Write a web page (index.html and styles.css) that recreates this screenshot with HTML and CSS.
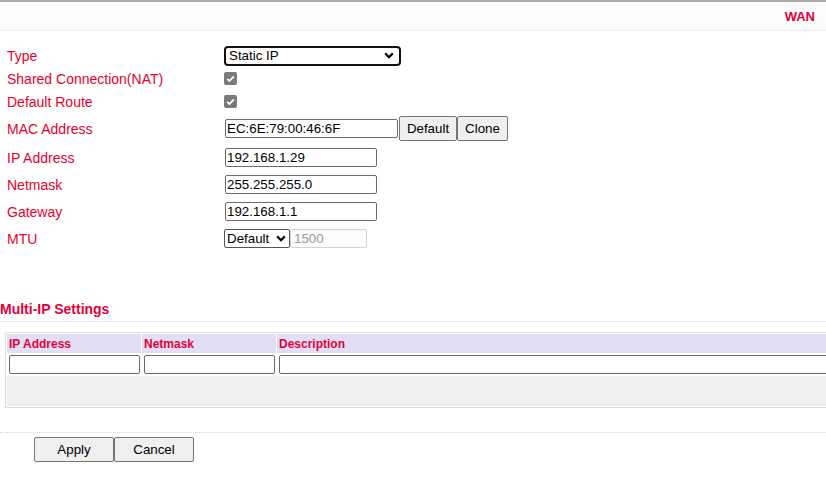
FILE: index.html
```html
<!DOCTYPE html>
<html lang="en">
<head>
    <meta charset="UTF-8">
    <meta name="viewport" content="width=device-width, initial-scale=1.0">
    <title>WAN</title>
    <link rel="stylesheet" href="styles.css">
</head>
<body>
    <div class="topbar">
        <span class="page-title">WAN</span>
    </div>

    <div class="wan-form">
        <div class="label">Type</div>
        <div class="field">
            <select class="sel sel-type">
                <option>Static IP</option>
                <option>DHCP</option>
                <option>PPPoE</option>
            </select>
        </div>

        <div class="label">Shared Connection(NAT)</div>
        <div class="field">
            <span class="check">
                <svg width="13" height="13" viewBox="0 0 13 13"><rect width="13" height="13" rx="2" fill="#7a7a7a"/><path d="M3.2 6.9 L5.4 9 L9.9 4.3" stroke="#fff" stroke-width="1.8" fill="none"/></svg>
            </span>
        </div>

        <div class="label">Default Route</div>
        <div class="field">
            <span class="check">
                <svg width="13" height="13" viewBox="0 0 13 13"><rect width="13" height="13" rx="2" fill="#7a7a7a"/><path d="M3.2 6.9 L5.4 9 L9.9 4.3" stroke="#fff" stroke-width="1.8" fill="none"/></svg>
            </span>
        </div>

        <div class="label">MAC Address</div>
        <div class="field">
            <input class="txt txt-mac" type="text" value="EC:6E:79:00:46:6F">
            <button class="btn btn-default">Default</button>
            <button class="btn btn-clone">Clone</button>
        </div>

        <div class="label">IP Address</div>
        <div class="field"><input class="txt" type="text" value="192.168.1.29"></div>

        <div class="label">Netmask</div>
        <div class="field"><input class="txt" type="text" value="255.255.255.0"></div>

        <div class="label">Gateway</div>
        <div class="field"><input class="txt" type="text" value="192.168.1.1"></div>

        <div class="label">MTU</div>
        <div class="field">
            <select class="sel sel-mtu">
                <option>Default</option>
                <option>Manual</option>
            </select>
            <input class="txt txt-mtu" type="text" value="1500" disabled>
        </div>
    </div>

    <div class="section-title">Multi-IP Settings</div>

    <div class="multi-wrap">
        <table class="multi">
            <tr>
                <th class="col-ip">IP Address</th>
                <th class="col-mask">Netmask</th>
                <th>Description</th>
            </tr>
            <tr class="edit-row">
                <td><input class="txt cell-input" type="text"></td>
                <td><input class="txt cell-input" type="text"></td>
                <td><input class="txt cell-input" type="text"></td>
            </tr>
            <tr class="empty-row">
                <td colspan="3"></td>
            </tr>
        </table>
    </div>

    <div class="actions">
        <button class="btn btn-act">Apply</button>
        <button class="btn btn-act">Cancel</button>
    </div>
</body>
</html>
```

FILE: styles.css
```css
html, body {
    overflow: hidden;
}

body {
    margin: 0;
    font-family: 'Liberation Sans', Arial, sans-serif;
    background-color: #ffffff;
    color: #000;
}

.topbar {
    border-top: 2px solid #a8a8a8;
    border-bottom: 1px solid #ebebeb;
    background-color: #fcfcfc;
    height: 28px;
    display: flex;
    align-items: center;
    justify-content: flex-end;
    padding-right: 11px;
}

.page-title {
    color: #e4003a;
    font-weight: bold;
    font-size: 13px;
}

.wan-form {
    display: grid;
    grid-template-columns: 217px auto;
    grid-template-rows: 23px 23px 23px 31px 27px 27px 27px 27px;
    margin-top: 13px;
    padding-left: 7px;
}

.label {
    display: flex;
    align-items: center;
    font-size: 14px;
    color: #e6002e;
}

.field {
    display: flex;
    align-items: center;
}

.sel {
    appearance: none;
    -webkit-appearance: none;
    font-family: 'Liberation Sans', Arial, sans-serif;
    font-size: 13.33px;
    color: #000;
    background: #fff url("data:image/svg+xml;utf8,<svg xmlns='http://www.w3.org/2000/svg' width='10' height='7'><path d='M1.2 1.4 L5 5.2 L8.8 1.4' stroke='black' stroke-width='2.2' fill='none'/></svg>") no-repeat;
    margin: 0;
}

.sel-type {
    width: 177px;
    height: 20px;
    border: 2px solid #111;
    border-radius: 4px;
    padding: 0 0 0 3px;
    background-position: right 5px center;
}

.sel-mtu {
    width: 66px;
    height: 19px;
    border: 1px solid #555;
    border-radius: 2px;
    padding: 0 0 0 2px;
    background-position: right 3px center;
}

.check {
    display: inline-flex;
    width: 13px;
    height: 13px;
}

.txt {
    font-family: 'Liberation Sans', Arial, sans-serif;
    font-size: 13.33px;
    height: 19px;
    box-sizing: border-box;
    border: 1px solid #6b6b6b;
    border-radius: 2px;
    padding: 0 1px;
    margin: 0 0 0 1px;
    width: 152px;
    color: #000;
    background: #fff;
}

.txt-mac {
    width: 173px;
    margin-right: 1px;
}

.txt-mtu {
    width: 77px;
    margin-left: 0;
    padding-left: 3px;
    border-color: #d3d3d3;
    color: #9a9a9a;
    background: #fcfcfc;
}

.btn {
    font-family: 'Liberation Sans', Arial, sans-serif;
    font-size: 13.33px;
    color: #000;
    background-color: #efefef;
    border: 1px solid #767676;
    border-radius: 2px;
    height: 25px;
    margin: 0;
    padding: 0;
    cursor: pointer;
}

.btn-default {
    width: 58px;
}

.btn-clone {
    width: 51px;
}

.section-title {
    margin-top: 49px;
    font-size: 14px;
    line-height: 16px;
    font-weight: bold;
    color: #e4003a;
    padding-bottom: 4px;
    border-bottom: 1px solid #ececec;
}

.multi-wrap {
    overflow: hidden;
    padding: 10px 0 0 5px;
}

.multi {
    width: 850px;
    border: 1px solid #dddddd;
    border-spacing: 1px;
    border-collapse: separate;
}

.multi th {
    background-color: #e2def5;
    height: 19px;
    padding: 0 2px;
    text-align: left;
    font-size: 12px;
    font-weight: bold;
    color: #e4003a;
}

.multi .col-ip,
.multi .col-mask {
    width: 130px;
}

.multi td {
    padding: 1px 1px 1px 2px;
}

.cell-input {
    width: 100%;
    margin: 0;
}

.empty-row td {
    background-color: #efefef;
    height: 30px;
    padding: 0;
}

.actions {
    margin-top: 24px;
    border-top: 1px dotted #d6d6d6;
    padding: 4px 0 0 34px;
    display: flex;
}

.btn-act {
    width: 80px;
}
```
